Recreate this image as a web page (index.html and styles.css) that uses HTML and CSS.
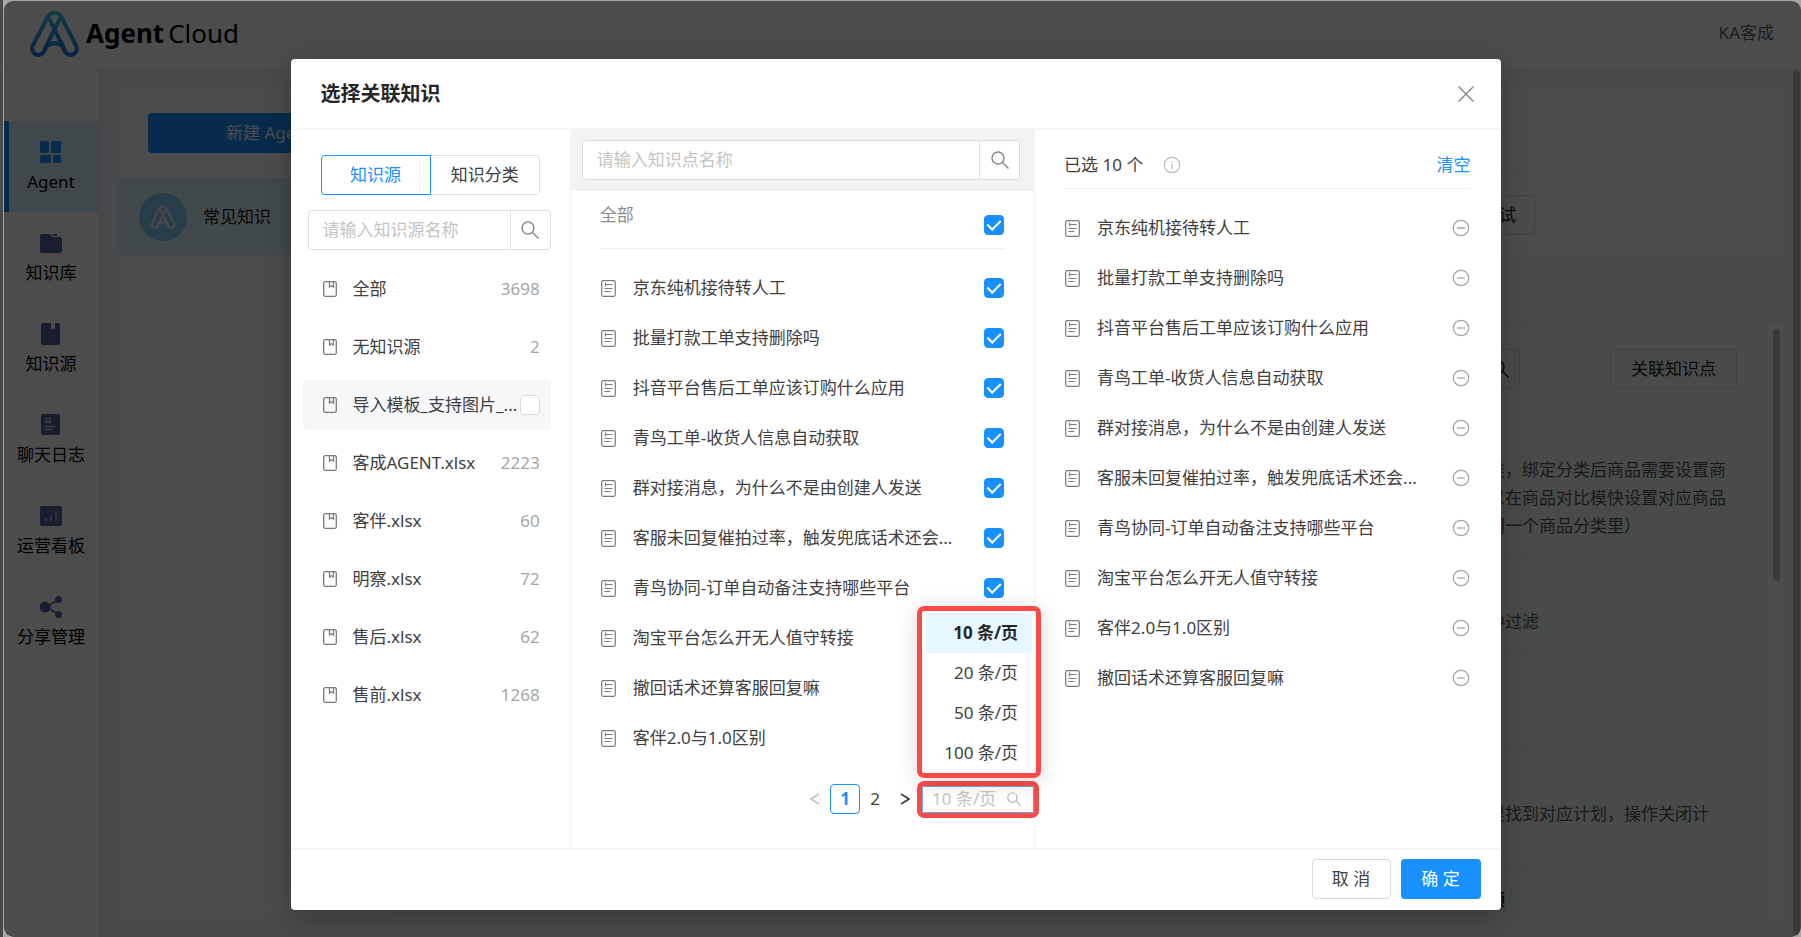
FILE: index.html
```html
<!DOCTYPE html>
<html lang="zh-CN">
<head>
<meta charset="utf-8">
<title>Agent Cloud</title>
<link rel="stylesheet" href="styles.css">
</head>
<body>
<svg class="sprite" aria-hidden="true">
  <defs>
    <linearGradient id="brand" x1="0" y1="0" x2="0" y2="1"><stop offset="0" stop-color="#3fbfe8"/><stop offset="1" stop-color="#1479e0"/></linearGradient>
  </defs>
  <symbol id="i-logo" viewBox="0 0 48 46">
    <g fill="none" stroke-width="4" stroke-linejoin="round" stroke-linecap="round">
      <path d="M17.500 6.500A7.500 7.500 0 0 1 30.500 6.500L45 34.500A6 6 0 0 1 34.500 41L31.500 35Q24 30 16.500 35L13.500 41A6 6 0 0 1 3 34.500Z"/>
      <path d="M18 7L33 37M30 7L15 37"/>
    </g>
  </symbol>
  <symbol id="i-search" viewBox="0 0 18 18"><g fill="none" stroke="currentColor" stroke-width="1.500"><circle cx="7" cy="7" r="6"/><path d="M11.500 11.500L17.500 17.500"/></g></symbol>
  <symbol id="i-book" viewBox="0 0 14 16"><g fill="none" stroke="currentColor" stroke-width="1.300"><rect x=".7" y=".7" width="12.600" height="14.600" rx="1.500"/><path d="M6.500 1v5l2-1.300L10.500 6V1"/></g></symbol>
  <symbol id="i-doc" viewBox="0 0 15 17"><g fill="none" stroke="currentColor" stroke-width="1.200"><rect x=".7" y=".7" width="13.600" height="15.600" rx="1.500"/><path d="M4.500 2.500v4M4.500 4.500h7M3.500 8.500h8M3.500 11.500h6"/></g></symbol>
  <symbol id="i-minus" viewBox="0 0 18 18"><g fill="none" stroke="currentColor" stroke-width="1.300"><circle cx="9" cy="9" r="7.700"/><path d="M5 9h8"/></g></symbol>
  <symbol id="i-info" viewBox="0 0 18 18"><g fill="none" stroke="currentColor" stroke-width="1.300"><circle cx="9" cy="9" r="7.700"/><path d="M9 8v5M9 5v1.500"/></g></symbol>
</svg>

<div class="window">
<div class="shell">
  <header class="topbar">
    <a class="brand" href="#"><svg class="brand-mark"><use href="#i-logo"/></svg><span class="brand-bold">Agent</span><span class="brand-light">Cloud</span></a>
    <span class="account">KA客成</span>
  </header>
  <div class="workspace">
    <nav class="sidebar">
      <a class="nav-item nav-active" href="#"><svg viewBox="0 0 22 22"><g fill="currentColor"><rect x="0" y="0" width="9" height="12" rx="2"/><rect x="11" y="0" width="10" height="12" rx="2"/><rect x="0" y="14" width="11" height="8" rx="2"/><rect x="13" y="14" width="8" height="8" rx="2"/></g></svg><span>Agent</span></a>
      <a class="nav-item" href="#"><svg viewBox="0 0 22 22"><path fill="currentColor" d="M2 2h8l3 3h7a2 2 0 0 1 2 2v12a2 2 0 0 1-2 2H2a2 2 0 0 1-2-2V4a2 2 0 0 1 2-2zM12 2h5v2h-3z"/></svg><span>知识库</span></a>
      <a class="nav-item" href="#"><svg viewBox="0 0 22 22"><path fill="currentColor" d="M3 0h8v7l2-2 2 2V0h3a2 2 0 0 1 2 2v18a2 2 0 0 1-2 2H3a2 2 0 0 1-2-2V2a2 2 0 0 1 2-2z"/></svg><span>知识源</span></a>
      <a class="nav-item" href="#"><svg viewBox="0 0 22 22"><rect x="1" y="0" width="19" height="21" rx="2" fill="currentColor"/><path fill="none" stroke="#c4c9dc" stroke-width="1.500" d="M6 4.500h4v4H6zM5.500 12.500h10M5.500 15.500h8"/></svg><span>聊天日志</span></a>
      <a class="nav-item" href="#"><svg viewBox="0 0 22 22"><rect x="0" y="1" width="22" height="20" rx="2" fill="currentColor"/><path fill="none" stroke="#c4c9dc" stroke-width="1.500" d="M6 13v3M11 10v6M16 6v10"/></svg><span>运营看板</span></a>
      <a class="nav-item" href="#"><svg viewBox="0 0 22 22"><g fill="currentColor"><circle cx="5" cy="11" r="5.500"/><circle cx="18.500" cy="3.500" r="3.500"/><circle cx="18.500" cy="18.500" r="3.500"/><path fill="none" stroke="currentColor" stroke-width="1.500" d="M18 4L6 11l12 7"/></g></svg><span>分享管理</span></a>
    </nav>
    <div class="panels">
      <section class="agents">
        <button class="create" type="button">新建 Agent</button>
        <a class="agent" href="#"><span class="avatar"><svg><use href="#i-logo"/></svg></span>常见知识</a>
      </section>
      <section class="detail">
        <div class="detail-head"></div>
        <div class="detail-tools"><button class="ghost test" type="button">测试</button></div>
        <div class="detail-band"></div>
        <div class="detail-body">
          <div class="detail-actions"><button class="ghost square" type="button" aria-label="搜索"><svg class="search-icon"><use href="#i-search"/></svg></button><button class="ghost link-btn" type="button">关联知识点</button></div>
          <div class="entry entry-first"><p>类，绑定分类后商品需要设置商<br>以在商品对比模快设置对应商品<br>同一个商品分类里）</p></div>
          <div class="entry"><p>中过滤</p></div>
          <div class="entry"></div>
          <div class="entry entry-tall"><p>里找到对应计划，操作关闭计</p></div>
          <div class="entry entry-last"><h3>频</h3></div>
          <span class="scroll-inner"></span>
        </div>
      </section>
    </div>
    <span class="scroll-outer"></span>
  </div>

  <div class="mask">
    <div class="modal" role="dialog" aria-labelledby="title">
      <header class="modal-head">
        <h2 id="title">选择关联知识</h2>
        <button class="close" type="button" aria-label="关闭"><svg viewBox="0 0 16 16"><path d="M.5.5l15 15M15.500.5l-15 15" fill="none" stroke="currentColor" stroke-width="1.500"/></svg></button>
      </header>
      <div class="columns">
        <section class="sources">
          <div class="tabs"><button class="tab tab-on" type="button">知识源</button><button class="tab" type="button">知识分类</button></div>
          <div class="search"><input type="text" aria-label="知识源名称" placeholder="请输入知识源名称"><button type="button" aria-label="搜索"><svg class="search-icon"><use href="#i-search"/></svg></button></div>
          <ul class="source-list">
            <li><svg class="book"><use href="#i-book"/></svg><span class="name">全部</span><span class="count">3698</span></li>
            <li><svg class="book"><use href="#i-book"/></svg><span class="name">无知识源</span><span class="count">2</span></li>
            <li class="hovered"><svg class="book"><use href="#i-book"/></svg><label class="name" for="src">导入模板_支持图片_...</label><input class="check" id="src" type="checkbox"></li>
            <li><svg class="book"><use href="#i-book"/></svg><span class="name">客成AGENT.xlsx</span><span class="count">2223</span></li>
            <li><svg class="book"><use href="#i-book"/></svg><span class="name">客伴.xlsx</span><span class="count">60</span></li>
            <li><svg class="book"><use href="#i-book"/></svg><span class="name">明察.xlsx</span><span class="count">72</span></li>
            <li><svg class="book"><use href="#i-book"/></svg><span class="name">售后.xlsx</span><span class="count">62</span></li>
            <li><svg class="book"><use href="#i-book"/></svg><span class="name">售前.xlsx</span><span class="count">1268</span></li>
          </ul>
        </section>

        <section class="points">
          <div class="points-search"><div class="search"><input type="text" aria-label="知识点名称" placeholder="请输入知识点名称"><button type="button" aria-label="搜索"><svg class="search-icon"><use href="#i-search"/></svg></button></div></div>
          <div class="all"><label for="all">全部</label><input class="check" id="all" type="checkbox" checked></div>
          <ul class="rows">
            <li><svg class="doc"><use href="#i-doc"/></svg><label class="name" for="p1">京东纯机接待转人工</label><input class="check" id="p1" type="checkbox" checked></li>
            <li><svg class="doc"><use href="#i-doc"/></svg><label class="name" for="p2">批量打款工单支持删除吗</label><input class="check" id="p2" type="checkbox" checked></li>
            <li><svg class="doc"><use href="#i-doc"/></svg><label class="name" for="p3">抖音平台售后工单应该订购什么应用</label><input class="check" id="p3" type="checkbox" checked></li>
            <li><svg class="doc"><use href="#i-doc"/></svg><label class="name" for="p4">青鸟工单-收货人信息自动获取</label><input class="check" id="p4" type="checkbox" checked></li>
            <li><svg class="doc"><use href="#i-doc"/></svg><label class="name" for="p5">群对接消息，为什么不是由创建人发送</label><input class="check" id="p5" type="checkbox" checked></li>
            <li><svg class="doc"><use href="#i-doc"/></svg><label class="name" for="p6">客服未回复催拍过率，触发兜底话术还会...</label><input class="check" id="p6" type="checkbox" checked></li>
            <li><svg class="doc"><use href="#i-doc"/></svg><label class="name" for="p7">青鸟协同-订单自动备注支持哪些平台</label><input class="check" id="p7" type="checkbox" checked></li>
            <li><svg class="doc"><use href="#i-doc"/></svg><span class="name">淘宝平台怎么开无人值守转接</span></li>
            <li><svg class="doc"><use href="#i-doc"/></svg><span class="name">撤回话术还算客服回复嘛</span></li>
            <li><svg class="doc"><use href="#i-doc"/></svg><span class="name">客伴2.0与1.0区别</span></li>
          </ul>
          <div class="pager">
            <button class="arrow arrow-off" type="button" aria-label="上一页"><svg viewBox="0 0 10 12"><path d="M9 1L1 6l8 5" fill="none" stroke="currentColor" stroke-width="1.500"/></svg></button>
            <button class="page page-on" type="button">1</button>
            <button class="page" type="button">2</button>
            <button class="arrow" type="button" aria-label="下一页"><svg viewBox="0 0 10 12"><path d="M1 1l8 5-8 5" fill="none" stroke="currentColor" stroke-width="1.800"/></svg></button>
            <div class="size">
              <div class="size-box"><input type="text" aria-label="每页条数" placeholder="10 条/页"><svg><use href="#i-search"/></svg></div>
              <div class="menu">
                <button class="option option-on" type="button">10 条/页</button>
                <button class="option" type="button">20 条/页</button>
                <button class="option" type="button">50 条/页</button>
                <button class="option" type="button">100 条/页</button>
              </div>
            </div>
          </div>
        </section>

        <section class="chosen">
          <div class="chosen-head"><span>已选 10 个</span><svg class="round"><use href="#i-info"/></svg><button class="clear" type="button">清空</button></div>
          <ul class="rows">
            <li><svg class="doc"><use href="#i-doc"/></svg><span class="name">京东纯机接待转人工</span><button class="remove" type="button" aria-label="移除"><svg class="round"><use href="#i-minus"/></svg></button></li>
            <li><svg class="doc"><use href="#i-doc"/></svg><span class="name">批量打款工单支持删除吗</span><button class="remove" type="button" aria-label="移除"><svg class="round"><use href="#i-minus"/></svg></button></li>
            <li><svg class="doc"><use href="#i-doc"/></svg><span class="name">抖音平台售后工单应该订购什么应用</span><button class="remove" type="button" aria-label="移除"><svg class="round"><use href="#i-minus"/></svg></button></li>
            <li><svg class="doc"><use href="#i-doc"/></svg><span class="name">青鸟工单-收货人信息自动获取</span><button class="remove" type="button" aria-label="移除"><svg class="round"><use href="#i-minus"/></svg></button></li>
            <li><svg class="doc"><use href="#i-doc"/></svg><span class="name">群对接消息，为什么不是由创建人发送</span><button class="remove" type="button" aria-label="移除"><svg class="round"><use href="#i-minus"/></svg></button></li>
            <li><svg class="doc"><use href="#i-doc"/></svg><span class="name">客服未回复催拍过率，触发兜底话术还会...</span><button class="remove" type="button" aria-label="移除"><svg class="round"><use href="#i-minus"/></svg></button></li>
            <li><svg class="doc"><use href="#i-doc"/></svg><span class="name">青鸟协同-订单自动备注支持哪些平台</span><button class="remove" type="button" aria-label="移除"><svg class="round"><use href="#i-minus"/></svg></button></li>
            <li><svg class="doc"><use href="#i-doc"/></svg><span class="name">淘宝平台怎么开无人值守转接</span><button class="remove" type="button" aria-label="移除"><svg class="round"><use href="#i-minus"/></svg></button></li>
            <li><svg class="doc"><use href="#i-doc"/></svg><span class="name">客伴2.0与1.0区别</span><button class="remove" type="button" aria-label="移除"><svg class="round"><use href="#i-minus"/></svg></button></li>
            <li><svg class="doc"><use href="#i-doc"/></svg><span class="name">撤回话术还算客服回复嘛</span><button class="remove" type="button" aria-label="移除"><svg class="round"><use href="#i-minus"/></svg></button></li>
          </ul>
        </section>
      </div>
      <footer class="modal-foot"><button class="ghost" type="button">取 消</button><button class="primary" type="button">确 定</button></footer>
    </div>
  </div>
</div>
</div>
</body>
</html>
```

FILE: styles.css
```css
* { box-sizing: border-box; }
html, body { height: 100%; }
body {
  margin: 0;
  background: #a6a6a6;
  color: #404040;
  font: 17px/28px "Noto Sans", "Noto Sans CJK SC", sans-serif;
  overflow: hidden;
}
button, input { font: inherit; color: inherit; margin: 0; }
button { padding: 0; border: 0; background: none; cursor: pointer; }
ul { list-style: none; margin: 0; padding: 0; }
h2, h3, p { margin: 0; }
a { color: inherit; text-decoration: none; }
svg { display: block; flex: none; }
.sprite { position: absolute; width: 0; height: 0; }

.window { height: 100%; border-left: 3px solid #4a4a4a; padding: 1px 0 0 1px; }
.shell {
  position: relative;
  height: 100%;
  display: flex;
  flex-direction: column;
  background: #fff;
  border-radius: 9px;
  overflow: hidden;
}

.topbar {
  height: 69px;
  flex: none;
  display: flex;
  align-items: center;
  justify-content: space-between;
  padding: 0 27px 4px 26px;
  border-bottom: 1px solid #f0f0f0;
}
.brand { display: flex; align-items: center; color: #000; font-size: 26px; }
.brand-mark { width: 49px; height: 47px; margin-right: 7px; stroke: url(#brand); }
.brand-bold { font-weight: 700; margin-right: 4px; }
.account { color: #666; }

.workspace { flex: 1; min-height: 0; display: flex; background: #f5f7fa; }
.sidebar { width: 94px; flex: none; padding-top: 51px; background: #fff; box-shadow: 4px 0 6px #e8eaf4; }
.nav-item {
  height: 91px;
  display: flex;
  flex-direction: column;
  align-items: center;
  padding-top: 20px;
  gap: 5px;
  color: #56659a;
}
.nav-item svg { width: 22px; height: 22px; }
.nav-item span { color: #000; }
.nav-active { background: #d9f1fb; box-shadow: inset 5px 0 #1890ff; color: #1890ff; }

.panels { flex: 1; min-width: 0; display: flex; margin: 19px 0 19px 20px; background: #fff; border-radius: 6px; overflow: hidden; }
.agents { width: 276px; flex: none; padding-top: 24px; border-right: 1px solid #f0f0f0; }
.create { display: block; width: 242px; height: 40px; margin-left: 30px; border-radius: 4px; background: #1890ff; color: #fff; }
.agent { display: flex; align-items: center; gap: 16px; height: 77px; margin-top: 25px; padding-left: 21px; background: #def3fb; color: #222; }
.avatar { display: grid; place-items: center; width: 48px; height: 48px; border-radius: 50%; background: #86cdf7; }
.avatar svg { width: 26px; height: 24px; stroke: #e6eef4; }

.detail { flex: 1; min-width: 0; display: flex; flex-direction: column; }
.detail-head { height: 81px; flex: none; border-bottom: 1px solid #efefef; }
.detail-tools { height: 88px; flex: none; display: flex; justify-content: flex-end; padding: 25px 250px 0 0; }
.detail-band { height: 65px; flex: none; background: #f6faf9; border-bottom: 1px solid #ececec; }
.detail-body { position: relative; flex: 1; margin-right: 17px; background: #f6faf9; }
.detail-actions { display: flex; justify-content: flex-end; gap: 90px; padding: 26px 31px 0 0; }
.ghost { height: 40px; min-width: 79px; border: 1px solid #d9d9d9; border-radius: 4px; background: #fff; }
.detail .ghost { background: none; color: #222; }
.detail .test { min-width: 72px; }
.detail .square { display: grid; place-items: center; min-width: 40px; }
.detail .link-btn { min-width: 127px; }
.entry { height: 96px; padding: 54px 0 0 calc(100% - 280px); border-bottom: 1px solid #eaeeed; color: #595959; }
.entry-first { height: 165px; padding-top: 67px; }
.entry-tall { height: 124px; }
.entry-last { height: 46px; padding-top: 16px; border: 0; }
.entry h3 { color: #222; font-size: 17px; }
.scroll-inner { position: absolute; top: 6px; right: -12px; width: 7px; height: 252px; border-radius: 4px; background: #c4c4c4; }
.scroll-outer { width: 7px; margin: 0 1px 3px 8px; border-radius: 4px; background: #c4c4c4; }

.mask {
  position: absolute;
  inset: 0;
  display: flex;
  justify-content: center;
  align-items: flex-start;
  padding: 58px 14px 24px 0;
  background: rgba(0, 0, 0, .7);
}
.modal { width: calc(100% - 48px); max-width: 1210px; border-radius: 4px; background: #fff; box-shadow: 0 8px 30px rgba(0, 0, 0, .25); }
.modal-head { height: 71px; display: flex; align-items: center; justify-content: space-between; padding: 0 27px 0 30px; border-bottom: 2px solid #f5f5f5; }
.modal-head h2 { font-size: 20px; color: #262626; }
.close { width: 16px; height: 16px; color: #8c8c8c; }
.columns { display: grid; grid-template-columns: minmax(0, 3fr) minmax(0, 5fr) minmax(0, 5fr); }

.sources { padding: 25px 19px 0 17px; }
.tabs { display: flex; margin: 0 11px 0 13px; }
.tab { flex: 1; height: 40px; border: 1px solid #e0e0e0; border-left: 0; border-radius: 0 4px 4px 0; }
.tab-on { border: 1px solid #1890ff; border-radius: 4px 0 0 4px; color: #1890ff; }
.search { display: flex; height: 40px; border: 1px solid #dedede; border-radius: 4px; background: #fff; color: #8c8c8c; }
.sources .search { margin-top: 15px; }
.search input { flex: 1; min-width: 0; padding: 0 14px; border: 0; background: none; outline: 0; }
input::placeholder { color: #c4c4c4; opacity: 1; }
.search button { display: grid; place-items: center; width: 40px; border-left: 1px solid #dedede; }
.search-icon { width: 18px; height: 18px; }
.source-list { display: grid; gap: 8px; margin: 14px 0 0 -5px; }
.source-list li { display: flex; align-items: center; height: 50px; padding: 0 11px 0 20px; border-radius: 4px; }
.source-list .hovered { background: #f6f7f9; }
.book { width: 14px; height: 16px; margin-right: 16px; color: #7a7a7a; }
.name { flex: 1; min-width: 0; white-space: nowrap; }
.count { color: #a6a6a6; }

.check { appearance: none; flex: none; display: grid; place-items: center; width: 20px; height: 20px; border: 1px solid #d9d9d9; border-radius: 4px; background: #fff; }
.check:checked { border-color: #1890ff; background: #1890ff; }
.check:checked::after { content: ""; width: 6px; height: 11px; margin-bottom: 3px; border: solid #fff; border-width: 0 2px 2px 0; transform: rotate(45deg); }

.points { border: solid #f2f2f2; border-width: 0 1px; }
.points-search { padding: 10px 14px 11px 11px; background: #f3f3f3; }
.all { display: flex; justify-content: space-between; height: 58px; margin: 0 30px 0 29px; padding-top: 10px; border-bottom: 1px solid #efefef; color: #8c8c8c; }
.all .check { margin-top: 14px; }
.rows { padding: 14px 30px 0 29px; }
.rows li { display: flex; align-items: center; height: 50px; }
.doc { width: 15px; height: 17px; margin: 0 17px 0 1px; color: #7a7a7a; }
.round { width: 18px; height: 18px; color: #a6a6a6; }

.pager { display: flex; align-items: center; height: 38px; margin-top: 17px; margin-bottom: 30px; justify-content: flex-end; }
.page { width: 30px; height: 30px; border-radius: 4px; }
.page-on { border: 1px solid #1890ff; color: #1890ff; font-weight: 700; }
.arrow { display: grid; place-items: center; width: 30px; height: 30px; }
.arrow svg { width: 10px; height: 12px; }
.arrow-off { color: #bfbfbf; }
.size { position: relative; width: 122px; margin-right: -5px; margin-left: -3px; }
.size-box { display: flex; align-items: center; height: 37px; padding: 0 13px 0 10px; border: 5px solid #fa4b4b; border-radius: 7px; background: #fff; box-shadow: inset 0 0 0 1px #69a9e6; color: #b8b8b8; }
.size-box input { flex: 1; min-width: 0; width: 60px; height: 25px; padding: 0; border: 0; background: none; outline: 0; }
.size-box svg { width: 14px; height: 14px; }
.menu { position: absolute; right: -2px; bottom: 40px; width: 124px; padding: 2px 4px 0; border: 5px solid #fa4b4b; border-radius: 7px; background: #fff; box-shadow: 0 4px 24px rgba(0, 0, 0, .14); }
.option { display: block; width: 100%; height: 40px; padding-right: 14px; border-radius: 4px; text-align: right; }
.option-on { background: #e6f7ff; color: #262626; font-weight: 700; }

.chosen-head { display: flex; align-items: center; height: 59px; margin: 0 30px 0 29px; padding-top: 12px; border-bottom: 1px solid #efefef; }
.chosen-head .round { margin-left: 20px; color: #bfbfbf; }
.clear { margin-left: auto; color: #1890ff; }
.modal-foot { display: flex; justify-content: flex-end; gap: 10px; height: 62px; padding: 9px 20px 0; border-top: 2px solid #f5f5f5; }
.primary { width: 80px; height: 40px; border-radius: 4px; background: #1890ff; color: #fff; }
```
